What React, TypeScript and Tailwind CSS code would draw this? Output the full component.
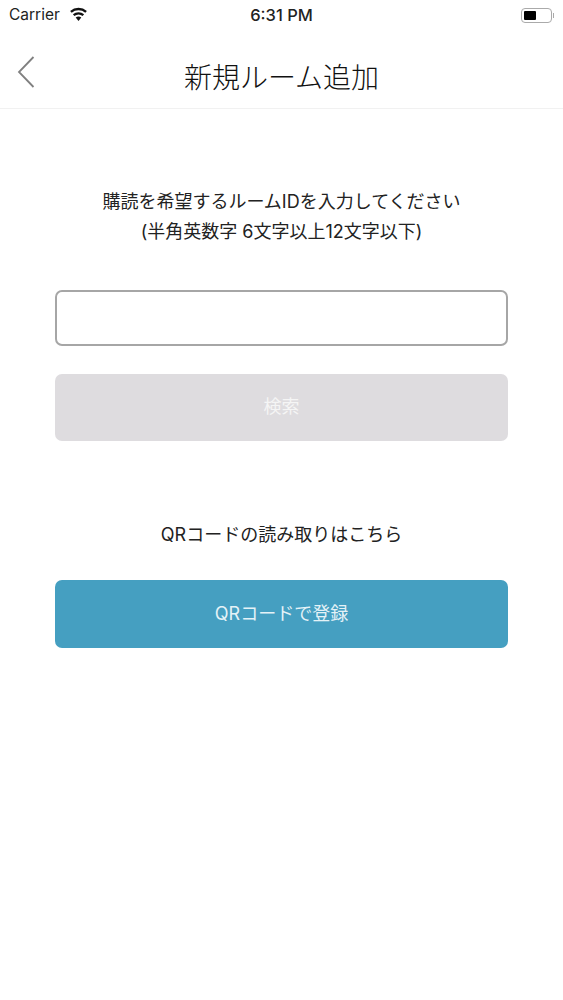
const font = { fontFamily: '"Inter", "Noto Sans CJK JP", sans-serif' };

function StatusBar() {
  return (
    <div className="flex h-[30px] items-center justify-between pl-[9px] pr-[9px] text-[15.5px] text-[#222]">
      <div className="flex w-[120px] items-center gap-[9px]">
        <span>Carrier</span>
        <svg width="19" height="14" viewBox="0 0 18 14" fill="#111" className="-mt-[3px]">
          <path d="M9 14 6.2 10.6a4.4 4.4 0 0 1 5.6 0Z" />
          <path d="M4.9 9.1 3.4 7.3a8.7 8.7 0 0 1 11.2 0l-1.5 1.8a6.4 6.4 0 0 0-8.2 0Z" />
          <path d="M2.2 5.8.6 3.9a13 13 0 0 1 16.8 0l-1.6 1.9a10.6 10.6 0 0 0-13.6 0Z" />
        </svg>
      </div>
      <span className="text-[16.5px] font-medium">6:31 PM</span>
      <div className="flex w-[120px] items-center justify-end">
        <div className="h-[15px] w-[31px] rounded-[4px] border border-[#aaa] p-[2px]">
          <div className="h-full w-[12px] rounded-[1px] bg-black" />
        </div>
        <div className="ml-[1px] h-[5px] w-[1px] bg-[#aaa]" />
      </div>
    </div>
  );
}

export default function App() {
  return (
    <div className="min-h-[1000px] w-full bg-white" style={font}>
      <StatusBar />
      <div className="relative flex h-[79px] items-center justify-center border-b border-[#f1f1f1] pt-[17px]">
        <button className="absolute left-[17px] top-[26px]">
          <svg width="18" height="32" viewBox="0 0 18 32" fill="none" stroke="#808080" strokeWidth="1.8">
            <path d="M16.5 1 2 16l14.5 15" />
          </svg>
        </button>
        <h1 className="text-[28px] font-light text-[#111]">新規ルーム追加</h1>
      </div>

      <div className="flex flex-col px-[55px] pt-[78px]">
        <p className="text-center text-[18px] leading-[30px] text-[#222]">
          購読を希望するルームIDを入力してください
          <br />
          (半角英数字 6文字以上12文字以下)
        </p>

        <input
          type="text"
          className="mt-[43px] h-[56px] w-full rounded-[7px] border-2 border-[#a6a6a6] bg-white"
        />

        <button className="mt-[28px] h-[67px] w-full rounded-[7px] bg-[#dedcdf] pb-[2px] text-[18px] text-[#f5f5f5]">
          検索
        </button>

        <p className="mt-[79px] text-center text-[18px] leading-[30px] text-[#222]">
          QRコードの読み取りはこちら
        </p>

        <button className="mt-[30px] h-[68px] w-full rounded-[7px] bg-[#459fc1] pb-[2px] text-[18px] text-[#e4f2f7]">
          QRコードで登録
        </button>
      </div>
    </div>
  );
}
